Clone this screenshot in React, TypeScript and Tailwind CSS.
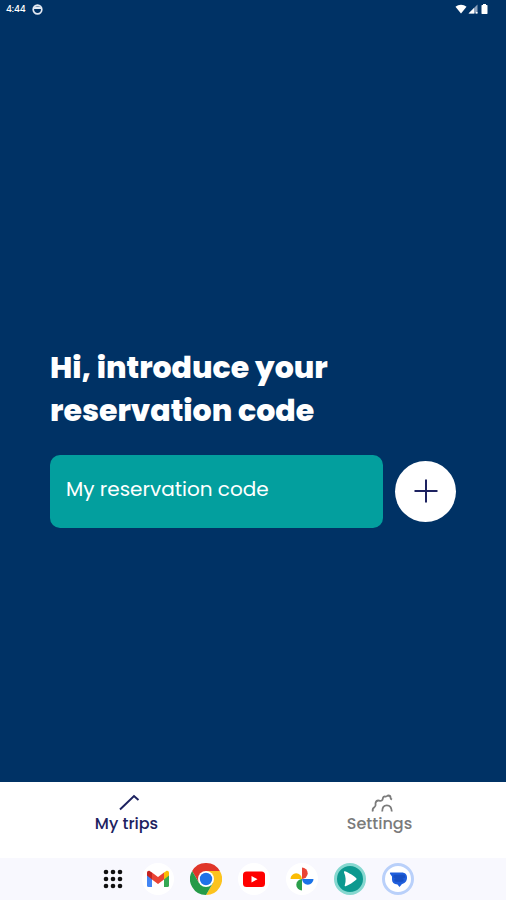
import { FormEvent, ReactNode, useState } from 'react';

type TabKey = 'trips' | 'settings';

const TripsIcon = () => (
  <svg viewBox="0 0 22 18" className="h-[18px] w-[22px]" fill="none" stroke="currentColor" strokeWidth="2" aria-hidden="true">
    <path d="M2 15.500 L16 2 L20.500 6" />
  </svg>
);

const GearsIcon = () => (
  <svg viewBox="0 0 22 18" className="h-[18px] w-[22px]" fill="none" stroke="currentColor" strokeWidth="1.8" aria-hidden="true">
    <path d="M1.800 17.500 C1.200 15 1.800 14 3.600 13 C5.400 12 4.200 10.400 4.600 8.800 C5.200 6.600 6.600 6.200 8.200 6.600 C10.400 7.200 11.600 6.400 11.800 4.600 C12 2.800 13.200 2.200 14.400 2.600 C15.600 2.800 16 1.600 17.400 1.500 C19.200 1.500 19.600 3 19.600 4 C19.600 5 20.400 5.200 21 5.600" />
    <path d="M11.200 17.500 C11.200 13.400 13 11.400 15.800 11.400 C18.800 11.400 20.600 13.400 20.800 17.500" />
  </svg>
);

const TABS: { key: TabKey; label: string; icon: ReactNode }[] = [
  { key: 'trips', label: 'My trips', icon: <TripsIcon /> },
  { key: 'settings', label: 'Settings', icon: <GearsIcon /> },
];

const DOCK_APPS: { name: string; icon: ReactNode }[] = [
  {
    name: 'Gmail',
    icon: (
      <svg viewBox="0 0 32 32" className="size-8" aria-hidden="true">
        <circle cx="16" cy="16" r="16" fill="#fff" />
        <path d="M5 11 V22.5 Q5 24 6.5 24 H10 V14.5 Z" fill="#4285f4" />
        <path d="M27 11 V22.5 Q27 24 25.500 24 H22 V14.500 Z" fill="#34a853" />
        <path d="M22 9.500 L24 8.200 C25.500 7.200 27 8.300 27 10 V12.500 L22 16.500 Z" fill="#fbbc04" />
        <path d="M10 9.500 L16 14 L22 9.500 V16.500 L16 21 L10 16.500 Z" fill="#ea4335" />
        <path d="M5 12.500 V10 C5 8.300 6.500 7.200 8 8.200 L10 9.500 V16.500 Z" fill="#c5221f" />
      </svg>
    ),
  },
  {
    name: 'Chrome',
    icon: (
      <svg viewBox="0 0 32 32" className="size-8" aria-hidden="true">
        <path d="M2.140 8 A16 16 0 0 1 29.860 8 L16 8 L9.070 20 Z" fill="#e0362a" />
        <path d="M29.860 8 A16 16 0 0 1 16 32 L22.930 20 L16 8 Z" fill="#fcc31e" />
        <path d="M16 32 A16 16 0 0 1 2.140 8 L9.070 20 L22.930 20 Z" fill="#259b48" />
        <circle cx="16" cy="16" r="8" fill="#fff" />
        <circle cx="16" cy="16" r="6.200" fill="#1f72e8" />
      </svg>
    ),
  },
  {
    name: 'YouTube',
    icon: (
      <svg viewBox="0 0 32 32" className="size-8" aria-hidden="true">
        <circle cx="16" cy="16" r="16" fill="#fff" />
        <rect x="5" y="8.500" width="22" height="15.500" rx="3.500" fill="#f00" />
        <path d="M13.500 13 L19.500 16.200 L13.500 19.400 Z" fill="#fff" />
      </svg>
    ),
  },
  {
    name: 'Photos',
    icon: (
      <svg viewBox="0 0 32 32" className="size-8" aria-hidden="true">
        <circle cx="16" cy="16" r="16" fill="#fff" />
        <path d="M16 4.500 A5.700 5.700 0 0 1 16 15.900 Z" fill="#ea4335" />
        <path d="M27.500 16 A5.700 5.700 0 0 1 16.100 16 Z" fill="#1a73e8" />
        <path d="M16 27.500 A5.700 5.700 0 0 1 16 16.100 Z" fill="#2b9f4b" />
        <path d="M4.500 16 A5.700 5.700 0 0 1 15.900 16 Z" fill="#fbbc04" />
      </svg>
    ),
  },
  {
    name: 'Trips',
    icon: (
      <svg viewBox="0 0 32 32" className="size-8" aria-hidden="true">
        <circle cx="16" cy="16" r="14.500" fill="#0c998f" stroke="#86d8d0" strokeWidth="3" />
        <path d="M11 8.200 C14.500 9.600 20 12.800 22.300 15.200 Q23 16 22.200 16.800 C19.500 19.200 15 22 11.600 23.300 Q10.200 23.600 10.800 22 C12.200 18.500 11.800 13 10 9.600 Q9.600 7.800 11 8.200 Z" fill="#fff" />
      </svg>
    ),
  },
  {
    name: 'Messages',
    icon: (
      <svg viewBox="0 0 32 32" className="size-8" aria-hidden="true">
        <circle cx="16" cy="16" r="14.500" fill="#fff" stroke="#b9d0fa" strokeWidth="3" />
        <path d="M8.600 9.500 H19.500 C23.500 9.500 25 11.800 25 14.500 C25 18.400 22.600 20.600 20 21 L17.500 24 L15.500 21.600 C11.800 21.400 10 19.200 10 16.500 V13.500 L8 10.700 Q7.600 9.500 8.600 9.500 Z" fill="#1f5edc" />
        <path d="M13 13.500 H21.500 M14 17 H20" stroke="#174fc4" strokeWidth="3.500" strokeLinecap="round" />
      </svg>
    ),
  },
];

const StatusBar = () => (
  <header className="flex h-[18px] items-center justify-between pr-[17px] pl-[6px]">
    <div className="flex items-center gap-[6px]">
      <span className="text-[9px] leading-none font-medium">4:44</span>
      <svg viewBox="0 0 11 11" className="size-[11px]" aria-hidden="true">
        <circle cx="5.500" cy="5.500" r="4.300" fill="none" stroke="#e4e9f2" strokeWidth="1.700" />
        <path d="M1.500 5 H9.500 L8.500 2.500 H2.500 Z" fill="#e4e9f2" />
      </svg>
    </div>
    <div className="flex items-center gap-px">
      <svg viewBox="0 0 12 10" className="h-[10px] w-3" fill="#fff" aria-hidden="true">
        <path d="M0.500 2.800 C3.500 0 8.500 0 11.500 2.800 L6 9.500 Z" />
      </svg>
      <svg viewBox="0 0 10 10" className="size-[10px]" aria-hidden="true">
        <path d="M9.500 0.500 V9.500 H0.500 Z" fill="#8ea2bd" />
        <path d="M6 4 V9.500 H0.500 Z M8 8 H9.500 V9.500 H8 Z" fill="#fff" />
      </svg>
      <svg viewBox="0 0 10 10" className="size-[10px]" fill="#fff" aria-hidden="true">
        <path d="M4 0 H7 V1 H8 Q8.500 1 8.500 1.700 V9.300 Q8.500 10 8 10 H3 Q2.500 10 2.500 9.300 V1.700 Q2.500 1 3 1 H4 Z" />
      </svg>
    </div>
  </header>
);

const Dock = () => (
  <footer className="flex h-[42px] items-center justify-center bg-[#f8f8fe] pl-2">
    <button type="button" aria-label="All apps" className="flex w-[42px] justify-center">
      <svg viewBox="0 0 20 20" className="size-5" fill="#111" aria-hidden="true">
        {[3, 10, 17].map((y) => [3, 10, 17].map((x) => <circle key={`${x}-${y}`} cx={x} cy={y} r="2.300" />))}
      </svg>
    </button>
    {DOCK_APPS.map((app) => (
      <button key={app.name} type="button" aria-label={app.name} className="flex w-12 justify-center">
        {app.icon}
      </button>
    ))}
  </footer>
);

const App = () => {
  const [code, setCode] = useState('');
  const [activeTab, setActiveTab] = useState<TabKey>('trips');

  const handleSubmit = (event: FormEvent<HTMLFormElement>) => {
    event.preventDefault();
    setCode('');
  };

  return (
    <div className="flex min-h-screen flex-col bg-[#003265] font-[Poppins,Inter,sans-serif] text-white">
      <StatusBar />
      <main className="flex flex-1 flex-col justify-center px-[50px] pt-[73px]">
        <h1 className="mb-[23px] max-w-[320px] text-[30px] leading-[43px] font-extrabold">
          <label htmlFor="reservation-code">Hi, introduce your reservation code</label>
        </h1>
        <form onSubmit={handleSubmit} className="flex items-center gap-3">
          <input
            id="reservation-code"
            type="text"
            value={code}
            placeholder="My reservation code"
            onChange={(event) => setCode(event.target.value)}
            className="h-[73px] min-w-0 flex-1 rounded-[10px] bg-[#039f9e] px-4 pb-1 text-[20px] text-white outline-none placeholder:text-white"
          />
          <button
            type="submit"
            aria-label="Add reservation"
            className="flex size-[61px] shrink-0 items-center justify-center rounded-full bg-white text-[#1d2260]"
          >
            <svg viewBox="0 0 24 24" className="size-6" fill="none" stroke="currentColor" strokeWidth="2" aria-hidden="true">
              <path d="M12 0.500 V23.500 M0.500 12 H23.500" />
            </svg>
          </button>
        </form>
      </main>
      <nav className="grid h-[76px] grid-cols-2 bg-white">
        {TABS.map((tab) => (
          <button
            key={tab.key}
            type="button"
            onClick={() => setActiveTab(tab.key)}
            className={`flex flex-col items-center pt-3 text-[16px] leading-5 font-medium ${
              activeTab === tab.key ? 'text-[#1d2260]' : 'text-[#7b7b7b]'
            }`}
          >
            <span className="flex h-5 pl-1">{tab.icon}</span>
            {tab.label}
          </button>
        ))}
      </nav>
      <Dock />
    </div>
  );
};

export default App;
